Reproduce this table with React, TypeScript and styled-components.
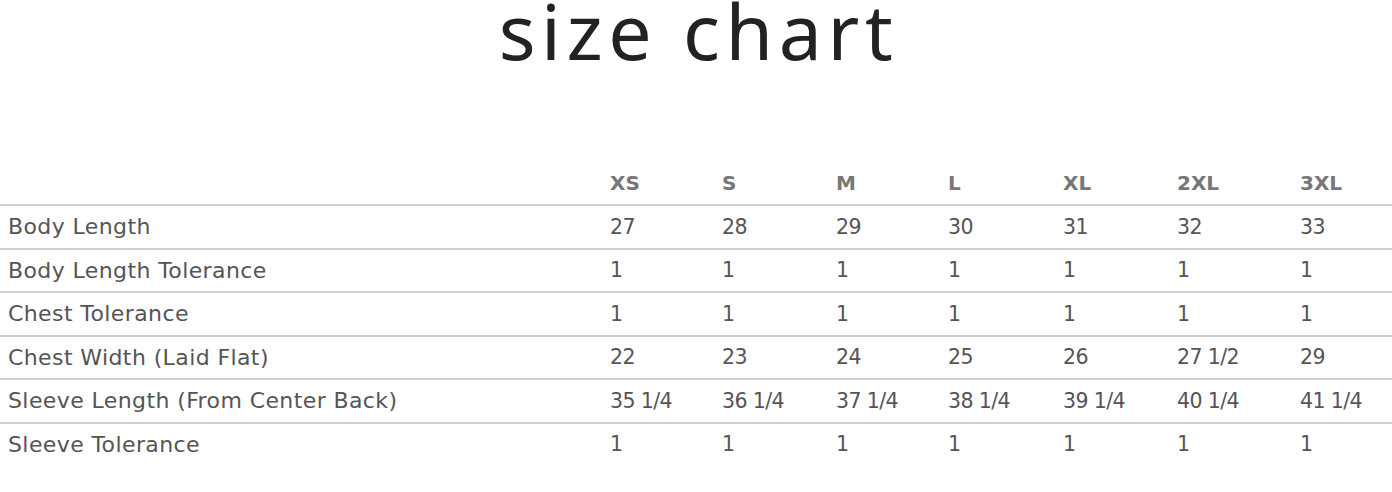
import React from "react"
import styled, { createGlobalStyle } from "styled-components"

const GlobalStyle = createGlobalStyle`
  html, body {
    margin: 0;
    padding: 0;
    background: #ffffff;
  }
`

const Page = styled.div`
  width: 1392px;
  height: 492px;
  overflow: hidden;
  background: #fff;
`

const Title = styled.h1`
  margin: 0;
  height: 62px;
  font-family: "Noto Sans", "DejaVu Sans", sans-serif;
  font-weight: 400;
  font-size: 77px;
  line-height: 62px;
  color: #222;
  text-align: center;
  letter-spacing: 5.6px;
  text-indent: 5px;
`

const TableWrap = styled.div`
  margin-top: 99px;
`

const StyledTable = styled.table`
  width: 100%;
  border-collapse: collapse;
  table-layout: fixed;
  font-family: "DejaVu Sans", "Liberation Sans", sans-serif;
`

const HeaderCell = styled.th`
  height: 43px;
  padding: 0 8px;
  text-align: left;
  font-size: 20px;
  font-weight: 700;
  color: #777;
  vertical-align: middle;
`

const Row = styled.tr`
  border-top: 2px solid #d0d0d0;
`

const Cell = styled.td<{ $label?: boolean }>`
  height: 41.5px;
  padding: 0 8px;
  text-align: left;
  color: #555;
  vertical-align: middle;
  white-space: nowrap;
  font-size: ${p => (p.$label ? "22px" : "20.5px")};
  letter-spacing: ${p => (p.$label ? "0.4px" : "-0.6px")};
`

const sizes = ["XS", "S", "M", "L", "XL", "2XL", "3XL"]
const widths = [602, 112, 114, 112, 115, 114, 123]

const rows: { label: string; values: string[] }[] = [
  { label: "Body Length", values: ["27", "28", "29", "30", "31", "32", "33"] },
  { label: "Body Length Tolerance", values: ["1", "1", "1", "1", "1", "1", "1"] },
  { label: "Chest Tolerance", values: ["1", "1", "1", "1", "1", "1", "1"] },
  { label: "Chest Width (Laid Flat)", values: ["22", "23", "24", "25", "26", "27 1/2", "29"] },
  {
    label: "Sleeve Length (From Center Back)",
    values: ["35 1/4", "36 1/4", "37 1/4", "38 1/4", "39 1/4", "40 1/4", "41 1/4"],
  },
  { label: "Sleeve Tolerance", values: ["1", "1", "1", "1", "1", "1", "1"] },
]

export default function App() {
  return (
    <Page>
      <GlobalStyle />
      <Title>size chart</Title>
      <TableWrap>
        <StyledTable>
          <colgroup>
            {widths.map((w, i) => (
              <col key={i} style={{ width: w }} />
            ))}
          </colgroup>
          <thead>
            <tr>
              <HeaderCell />
              {sizes.map(s => (
                <HeaderCell key={s}>{s}</HeaderCell>
              ))}
            </tr>
          </thead>
          <tbody>
            {rows.map(r => (
              <Row key={r.label}>
                <Cell $label>{r.label}</Cell>
                {r.values.map((v, i) => (
                  <Cell key={i}>{v}</Cell>
                ))}
              </Row>
            ))}
          </tbody>
        </StyledTable>
      </TableWrap>
    </Page>
  )
}
